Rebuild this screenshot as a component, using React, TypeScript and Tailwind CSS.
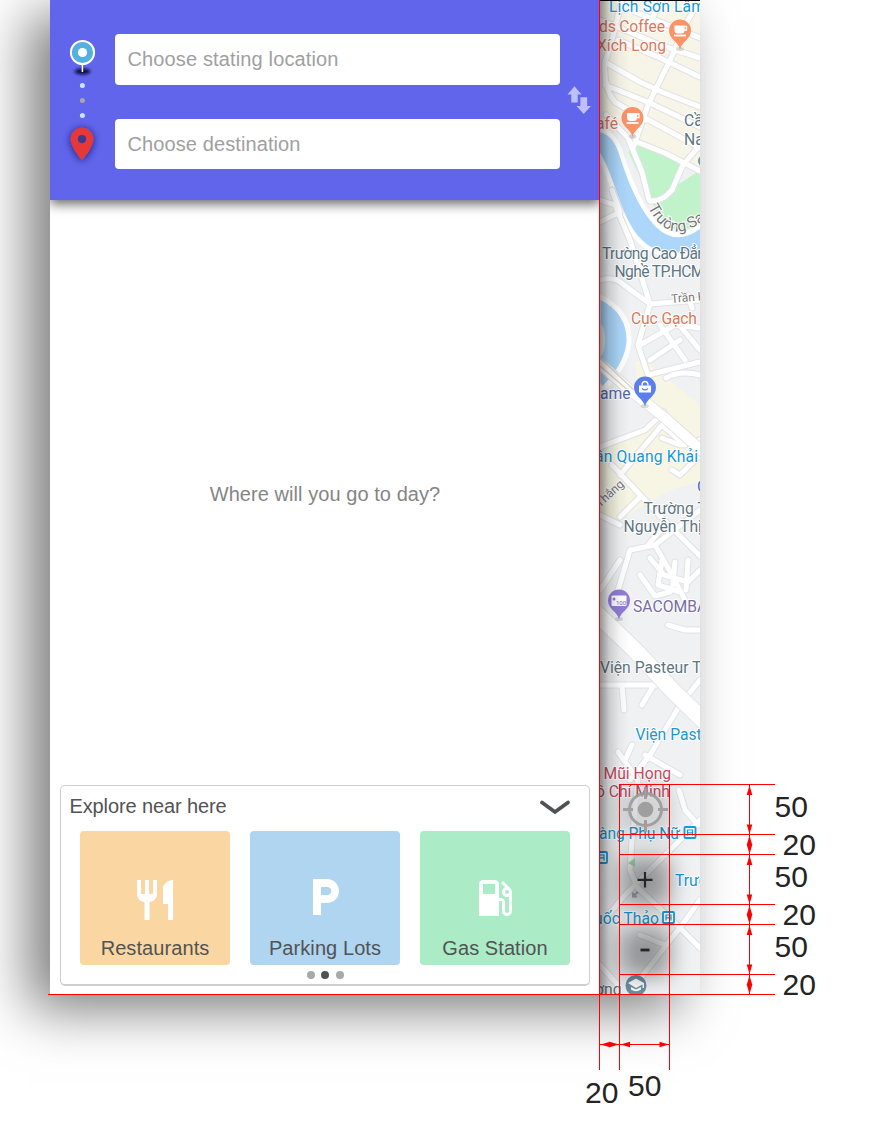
import type { ReactNode } from "react";

const halo = "[paint-order:stroke] stroke-white stroke-[2px]";

function Pin({ x, y, color, children }: { x: number; y: number; color: string; children: ReactNode }) {
  return (
    <g transform={`translate(${x} ${y})`}>
      <ellipse cx="0" cy="17.500" rx="4" ry="2" fill="#999" opacity=".35" />
      <path d="M0 18C-1.500 10-11 8-11-1A10.700 10.700 0 0 1 11-1C11 8 1.500 10 0 18Z" fill={color} />
      {children}
    </g>
  );
}

function Cup() {
  return (
    <g fill="#fff">
      <path d="M-5.500-6H4.500V-1Q4.500 2 1 2H-2Q-5.500 2-5.500-1Z" />
      <path d="M4-5H6.500V-1.500H4" fill="none" stroke="#fff" strokeWidth="1.300" />
      <path d="M-6 4H6" stroke="#fff" strokeWidth="1.800" />
    </g>
  );
}

function Bus({ x, y }: { x: number; y: number }) {
  return (
    <g transform={`translate(${x} ${y})`} fill="none" stroke="#169bdf" strokeWidth="1.800">
      <rect x="0" y="0" width="11" height="11" rx="1" fill="#fff" />
      <path d="M3 8.500V3H8V8.500M3 5.800H8" strokeWidth="1.200" />
    </g>
  );
}

const blocks = [
  "M0 20L25 30L60 45L100 58",
  "M5 62L40 82L62 92L100 107",
  "M18 40L60 58L100 77",
  "M5 85L50 103L100 127",
  "M22 0L12 40L5 62Q3 88 15 102L45 120",
  "M100 0L85 25L75 50L48 105L33 148",
  "M35 12L68 25L100 38",
  "M62 0L50 22M45 118L100 148",
  "M37 142L65 153L100 171",
  "M100 145L83 165L72 190Q62 202 50 201",
  "M6 115L28 138L42 172L49 200",
];

const streets = [
  "M0 200L15 205L30 240L50 304",
  "M12 190L20 212L0 222",
  "M0 280Q15 276 24 285L50 304L100 300",
  "M50 304L38 345L48 375L100 362",
  "M40 345L75 325L100 328",
  "M60 325L85 360M75 320L100 350M50 360L80 340",
  "M88 295L92 308",
  "M66 378Q80 370 100 375",
  "M0 447L45 430L64 412",
  "M12 465L45 500L60 516L100 556",
  "M85 445L62 425L20 475",
  "M100 440L80 445L62 438M100 455L80 475L72 470",
  "M20 517L40 497M0 515L20 525",
  "M15 600L30 550L55 545L100 510",
  "M48 545L65 525M55 545L72 575L85 600",
  "M0 590L20 560",
  "M50 558L64 575L88 582L100 570",
  "M62 560L58 585L80 592",
  "M75 562L72 590M88 560L86 590",
  "M40 575L55 596L70 592",
  "M68 625L85 630L100 630",
  "M0 685L60 685M22 685L24 710M42 705L55 683",
  "M100 680L80 705L50 755L30 780",
  "M18 752L38 780L32 840L30 870L38 888",
  "M25 760L32 745M45 755L80 775",
  "M79 790L85 810L98 825",
  "M100 820L72 848L50 870L25 895L0 925",
  "M38 888L70 918L100 948",
  "M100 900L82 925L35 985",
  "M40 935L65 945M0 965L18 985",
];

function CityMap() {
  return (
    <svg width="100" height="994" viewBox="0 0 100 994" className="block overflow-hidden font-['Roboto',sans-serif]">
      <defs>
        <linearGradient id="panel-shade">
          <stop stopColor="#000" stopOpacity=".42" />
          <stop offset=".3" stopColor="#000" stopOpacity=".16" />
          <stop offset=".65" stopColor="#000" stopOpacity=".04" />
          <stop offset="1" stopColor="#000" stopOpacity="0" />
        </linearGradient>
        <filter id="button-blur" x="-60%" y="-60%" width="220%" height="220%">
          <feGaussianBlur stdDeviation="11" />
        </filter>
      </defs>
      <rect width="100" height="994" fill="#f0f1f3" />
      <path d="M0 0H100V168L38 138L0 110Z" fill="#f7f5e7" />
      <path d="M35 362L45 360L100 405V482L70 490L20 520L0 515V455L60 415L38 395Z" fill="#f7f5e3" />
      <path d="M28 152L37 143L83 163L70 190L100 170V225L78 232L58 214Z" fill="#c1f3ca" />
      <path d="M-2 132Q13 133 20 157Q35 205 55 226T100 229V249Q62 260 42 240C20 218 17 180-2 149Z" fill="#acd7fb" stroke="#fff" strokeWidth="9" />
      <path d="M-2 132Q13 133 20 157Q35 205 55 226T100 229V249Q62 260 42 240C20 218 17 180-2 149Z" fill="#acd7fb" />
      <path d="M-2 296Q30 310 29 342Q27 366 2 390L-2 384Z" fill="#acd7fb" stroke="#fff" strokeWidth="5" />
      <ellipse cx="0" cy="340" rx="5" ry="16" fill="#e8ebee" />
      <g fill="none" stroke="#e1e2e5" strokeWidth="7" strokeLinejoin="round" strokeLinecap="round">
        {blocks.map((d) => <path key={d} d={d} />)}
        {streets.map((d) => <path key={d} d={d} />)}
      </g>
      <g fill="none" stroke="#fff" strokeWidth="5" strokeLinejoin="round" strokeLinecap="round">
        {blocks.map((d) => <path key={d} d={d} />)}
        {streets.map((d) => <path key={d} d={d} />)}
      </g>
      <g fill="none" stroke="#e3e4e6">
        <path d="M-5 360L30 390L65 418L110 458" strokeWidth="12" />
        <path d="M-5 612L35 650L72 690L110 727" strokeWidth="18" />
      </g>
      <g fill="none" stroke="#fff">
        <path d="M-5 360L30 390L65 418L110 458" strokeWidth="10" />
        <path d="M-5 612L35 650L72 690L110 727" strokeWidth="16" />
      </g>
      <path d="M0 358L34 390M0 366L30 392" fill="none" stroke="#ddd7c7" strokeWidth="1.500" />
      <path d="M28 863l7-5v9z" fill="#a9e5b4" />
      <path d="M47 892l-5 4m0-3.500v4h4" transform="translate(-9)" fill="none" stroke="#aaaec3" strokeWidth="2" />

      <g className={halo} fontSize="15.700">
        <g fill="#1c96cf">
          <text x="9" y="12" textLength="96">Lịch Sơn Lâm</text>
          <text x="-5" y="461.500" textLength="103">ần Quang Khải</text>
          <text x="35.500" y="740">Viện Pasteur</text>
          <text x="-1" y="839" textLength="81">àng Phụ Nữ</text>
          <text x="75" y="886">Trường</text>
          <text x="-6" y="924" textLength="65">uốc Thảo</text>
        </g>
        <g fill="#d9795a">
          <text x="-1" y="32" textLength="66">ds Coffee</text>
          <text x="-3" y="50.500" textLength="69">Xích Long</text>
          <text x="-4" y="128.500">afé</text>
          <text x="31" y="323.500" textLength="66">Cục Gạch</text>
        </g>
        <g fill="#5d7580">
          <text x="84" y="126">Cầu</text>
          <text x="84" y="144.500">Nam</text>
          <text x="2" y="258.500" textLength="112">Trường Cao Đẳng</text>
          <text x="14.500" y="276.500" textLength="90">Nghề TP.HCM</text>
          <text x="43.500" y="514">Trường THPT</text>
          <text x="23.500" y="532">Nguyễn Thị</text>
          <text x="0" y="673">Viện Pasteur TP</text>
          <text x="-5" y="995">ơng</text>
        </g>
        <text x="0" y="398.500" fill="#5069ad">ame</text>
        <text x="97" y="491.500" fill="#4468c5">C</text>
        <text x="33" y="611.500" fill="#776ca3">SACOMBANK</text>
        <g fill="#bf4c64">
          <text x="3.500" y="778.500">Mũi Họng</text>
          <text x="-4" y="796.500" textLength="74">ồ Chí Minh</text>
        </g>
        <g fill="#777" fontSize="12">
          <text x="71.500" y="303" transform="rotate(-5 71 303)">Trần Khắc</text>
          <text x="0" y="508" transform="rotate(-43 0 508)">Thắng</text>
          <path id="river-road" d="M48 207Q70 252 112 214" fill="none" stroke="none" />
          <text fontSize="15.500"><textPath href="#river-road">Trường Sa</textPath></text>
        </g>
      </g>

      <Pin x={80} y={31.500} color="#fb9368"><Cup /></Pin>
      <Pin x={32.500} y={119} color="#fb9368"><Cup /></Pin>
      <Pin x={45} y={388.500} color="#5a7fea">
        <path d="M-6-3H6V4H-6Z" fill="#fff" />
        <path d="M-3-3Q-3-7 0-7T3-3" fill="none" stroke="#fff" strokeWidth="1.500" />
        <path d="M-3 0Q0 3 3 0" fill="none" stroke="#5a7fea" strokeWidth="1.200" />
      </Pin>
      <Pin x={19} y={601.500} color="#927ed8">
        <rect x="-7.500" y="-6" width="15" height="10.500" rx="1" fill="#fff" />
        <circle cx="-5" cy="-2.500" r="1.500" fill="#927ed8" />
        <text x="-3" y="3" fontSize="6" fill="#7560c4">100</text>
      </Pin>
      <circle cx="104" cy="161" r="6" fill="#6997ae" />
      <Bus x={84.500} y={827} />
      <Bus x={-4} y={852} />
      <Bus x={63} y={912} />
      <circle cx="36" cy="985.500" r="10.500" fill="#6d8fa4" />
      <path d="M28 983L36 978.500L44 983V988H42.500V984.500L36 988Z M31 987V989.500Q36 993 41 989.500V987L36 989.500Z" fill="#fff" />

      <g fill="#000" opacity=".38" filter="url(#button-blur)">
        <rect x="20" y="786" width="50" height="50" rx="3" opacity=".45" />
        <rect x="20" y="857" width="50" height="50" rx="3" />
        <rect x="20" y="927" width="50" height="50" rx="3" />
      </g>
      <rect width="30" height="994" fill="url(#panel-shade)" />
      <g fill="none" stroke="#9b9b9b" strokeWidth="3" opacity=".9">
        <circle cx="45.500" cy="809.500" r="16" fill="#ddd" fillOpacity=".6" />
        <path d="M45.500 787V799M45.500 820V832M23 809.500H33M58 809.500H68" />
        <circle cx="45.500" cy="809.500" r="7.800" fill="#9b9b9b" stroke="none" />
      </g>
      <g stroke="#27252c" strokeWidth="2.200">
        <path d="M37.500 879.800H52.500M45 872V887.500" />
        <path d="M40.500 950H49.500" strokeWidth="2.800" />
      </g>
      <path d="M0 .5H100" stroke="#000" />
    </svg>
  );
}

function TripMarkers() {
  return (
    <svg width="46" height="136" viewBox="0 0 46 136" className="block">
      <defs>
        <filter id="spot" x="-50%" y="-100%" width="200%" height="300%"><feGaussianBlur stdDeviation="1.500" /></filter>
        <filter id="pin-shadow" x="-60%" y="-60%" width="220%" height="220%"><feDropShadow dx="0" dy="1" stdDeviation="4" floodColor="#171747" floodOpacity=".75" /></filter>
      </defs>
      <ellipse cx="22.500" cy="37.500" rx="8" ry="3" fill="#111044" filter="url(#spot)" />
      <path d="M22.400 28V38" stroke="#fff" strokeWidth="1.500" />
      <circle cx="22.500" cy="18.500" r="11.600" fill="#54b1df" stroke="#fff" strokeWidth="2" />
      <circle cx="22.500" cy="18.500" r="4.600" fill="#fff" />
      <circle cx="22.400" cy="51.500" r="2.500" fill="#cbe4fb" />
      <circle cx="22.400" cy="66.500" r="2.500" fill="#a7a7aa" />
      <circle cx="22.400" cy="81.500" r="2.500" fill="#cbe4fb" />
      <path d="M22 93.800A11.300 11.300 0 0 1 33.300 105C33.300 114 22 126 22 126S10.700 114 10.700 105A11.300 11.300 0 0 1 22 93.800Z" fill="#e73839" filter="url(#pin-shadow)" />
      <circle cx="22" cy="105.100" r="4.100" fill="#3c3991" />
    </svg>
  );
}

function Tile({ color, label, iconGap, children }: { color: string; label: string; iconGap: string; children: ReactNode }) {
  return (
    <button className={`flex h-[134px] w-[150px] flex-col items-center justify-end rounded-[4px] pb-0.5 ${color}`}>
      <svg viewBox="0 0 24 24" className={`h-12 w-12 fill-white ${iconGap}`}>{children}</svg>
      <span className="whitespace-nowrap text-center text-[20px] leading-[29px] tracking-[.08px]">{label}</span>
    </button>
  );
}

function Panel() {
  return (
    <main className="flex h-[994px] w-[550px] flex-col bg-white">
      <header className="flex h-[200px] shrink-0 bg-[#6065ec] pl-2.5 pt-[34px] shadow-[0_4px_11px_rgba(0,0,0,.6)] [clip-path:inset(0_0_-20px_0)]">
        <TripMarkers />
        <div className="ml-[9px] flex w-[445px] flex-col gap-[34px] text-[20px]">
          <input placeholder="Choose stating location" className="h-[51px] rounded-[4px] bg-white px-[12.5px] outline-none tracking-[.14px] placeholder:text-[#a0a0a0]" />
          <input placeholder="Choose destination" className="h-[50px] rounded-[4px] bg-white px-[12.5px] outline-none tracking-[.1px] placeholder:text-[#a0a0a0]" />
        </div>
        <svg width="25" height="30" viewBox="0 0 25 30" className="ml-[7px] mt-[51px]" fill="#bec0fb">
          <path d="M7.500 1.200L14.500 9.500H10.700V17.500H4.300V9.500H.5Z" />
          <path d="M16.700 29L24 21H20.200V12.300H13.400V21H9.500Z" />
        </svg>
      </header>
      <p className="mt-[279px] text-center text-[20px] leading-[30px] tracking-[.06px] text-[#858585]">Where will you go to day?</p>
      <section className="mx-2.5 mb-2 mt-auto flex h-[201px] flex-col rounded-[5px] border border-b-2 border-[#cfcfcf] text-[#525355]">
        <div className="flex h-[45px] items-center justify-between pl-[8.500px] pr-[18px]">
          <h2 className="pb-[5px] text-[20px] tracking-[-.12px]">Explore near here</h2>
          <svg width="32" height="16" viewBox="0 0 32 16" className="mb-1" fill="none"><path d="M3 3.500L16 13L29 3.500" stroke="#505153" strokeWidth="3.800" strokeLinecap="round" /></svg>
        </div>
        <div className="flex gap-5 px-[19px]">
          <Tile color="bg-[#fad6a2]" label="Restaurants" iconGap="mb-[10px]">
            <path d="M11 9H9V2H7v7H5V2H3v7c0 2.120 1.660 3.840 3.750 3.970V22h2.500v-9.030C11.340 12.840 13 11.120 13 9V2h-2v7zm5-3v8h2.500v8H21V2c-2.760 0-5 2.240-5 4z" />
          </Tile>
          <Tile color="bg-[#afd5f0]" label="Parking Lots" iconGap="mb-[13px]">
            <path d="M13 3H6v18h4v-6h3c3.310 0 6-2.690 6-6s-2.690-6-6-6zm.2 8H10V7h3.200c1.100 0 2 .9 2 2s-.9 2-2 2z" />
          </Tile>
          <Tile color="bg-[#abebc6]" label="Gas Station" iconGap="mb-[12px]">
            <path d="M19.770 7.230l.01-.01-3.720-3.720L15 4.560l2.110 2.110c-.94.36-1.610 1.260-1.610 2.330 0 1.380 1.120 2.500 2.500 2.500.36 0 .69-.08 1-.21v7.210c0 .55-.45 1-1 1s-1-.45-1-1V14c0-1.100-.9-2-2-2h-1V5c0-1.100-.9-2-2-2H6c-1.100 0-2 .9-2 2v16h10v-7.500h1.500v5c0 1.380 1.120 2.500 2.500 2.500s2.500-1.120 2.500-2.500V9c0-.69-.28-1.320-.73-1.770zM12 10H6V5h6v5zm6 0c-.55 0-1-.45-1-1s.45-1 1-1 1 .45 1 1-.45 1-1 1z" />
          </Tile>
        </div>
        <div className="mt-[6px] flex justify-center gap-[6.500px]">
          <i className="h-2 w-2 rounded-full bg-[#a9a9a9]" />
          <i className="h-2 w-2 rounded-full bg-[#515254]" />
          <i className="h-2 w-2 rounded-full bg-[#a9a9a9]" />
        </div>
      </section>
    </main>
  );
}

const rows = [784.5, 834.5, 854.5, 904.5, 924.5, 974.5, 994.5];
const columns = [599.5, 619.5, 669.5];

function Measurements() {
  return (
    <svg viewBox="0 0 875 1145" className="pointer-events-none absolute inset-0 h-[1145px] w-[875px]" fill="#fe0000" stroke="none">
      <g stroke="#fe0000">
        {rows.map((y, i) => <path key={y} d={`M${i === 6 ? 48 : 619} ${y}H775`} />)}
        <path d="M599.500 0V1070M619.500 784V1070M669.500 784V1070M749.500 785V994M600 1044.500H669" />
      </g>
      {rows.slice(0, 6).map((y, i) => (
        <g key={y}>
          <path d={`M749.500 ${y + 1}l-2.800 9.500h5.600z`} />
          <path d={`M749.500 ${rows[i + 1] - .5}l-2.800-9.500h5.600z`} />
        </g>
      ))}
      {columns.slice(0, 2).map((x, i) => (
        <g key={x}>
          <path d={`M${x + 1} 1044.500l9.500-2.800v5.600z`} />
          <path d={`M${columns[i + 1] - .5} 1044.500l-9.500-2.800v5.600z`} />
        </g>
      ))}
      <g fill="#242424" fontSize="30">
        <text x="774.500" y="816.500">50</text><text x="782.500" y="854.500">20</text>
        <text x="774.500" y="887">50</text><text x="782.500" y="924.500">20</text>
        <text x="774.500" y="957">50</text><text x="782.500" y="994.500">20</text>
        <text x="585" y="1102.500">20</text><text x="628" y="1095.500">50</text>
      </g>
    </svg>
  );
}

export default function App() {
  return (
    <div className="relative h-[1145px] w-[875px] overflow-hidden bg-white pl-[50px] font-['Liberation_Sans',Arial,sans-serif]">
      <div className="flex h-[994px] w-[650px] shadow-[-21px_15px_52px_rgba(0,0,0,.52)]">
        <Panel />
        <CityMap />
      </div>
      <Measurements />
    </div>
  );
}
